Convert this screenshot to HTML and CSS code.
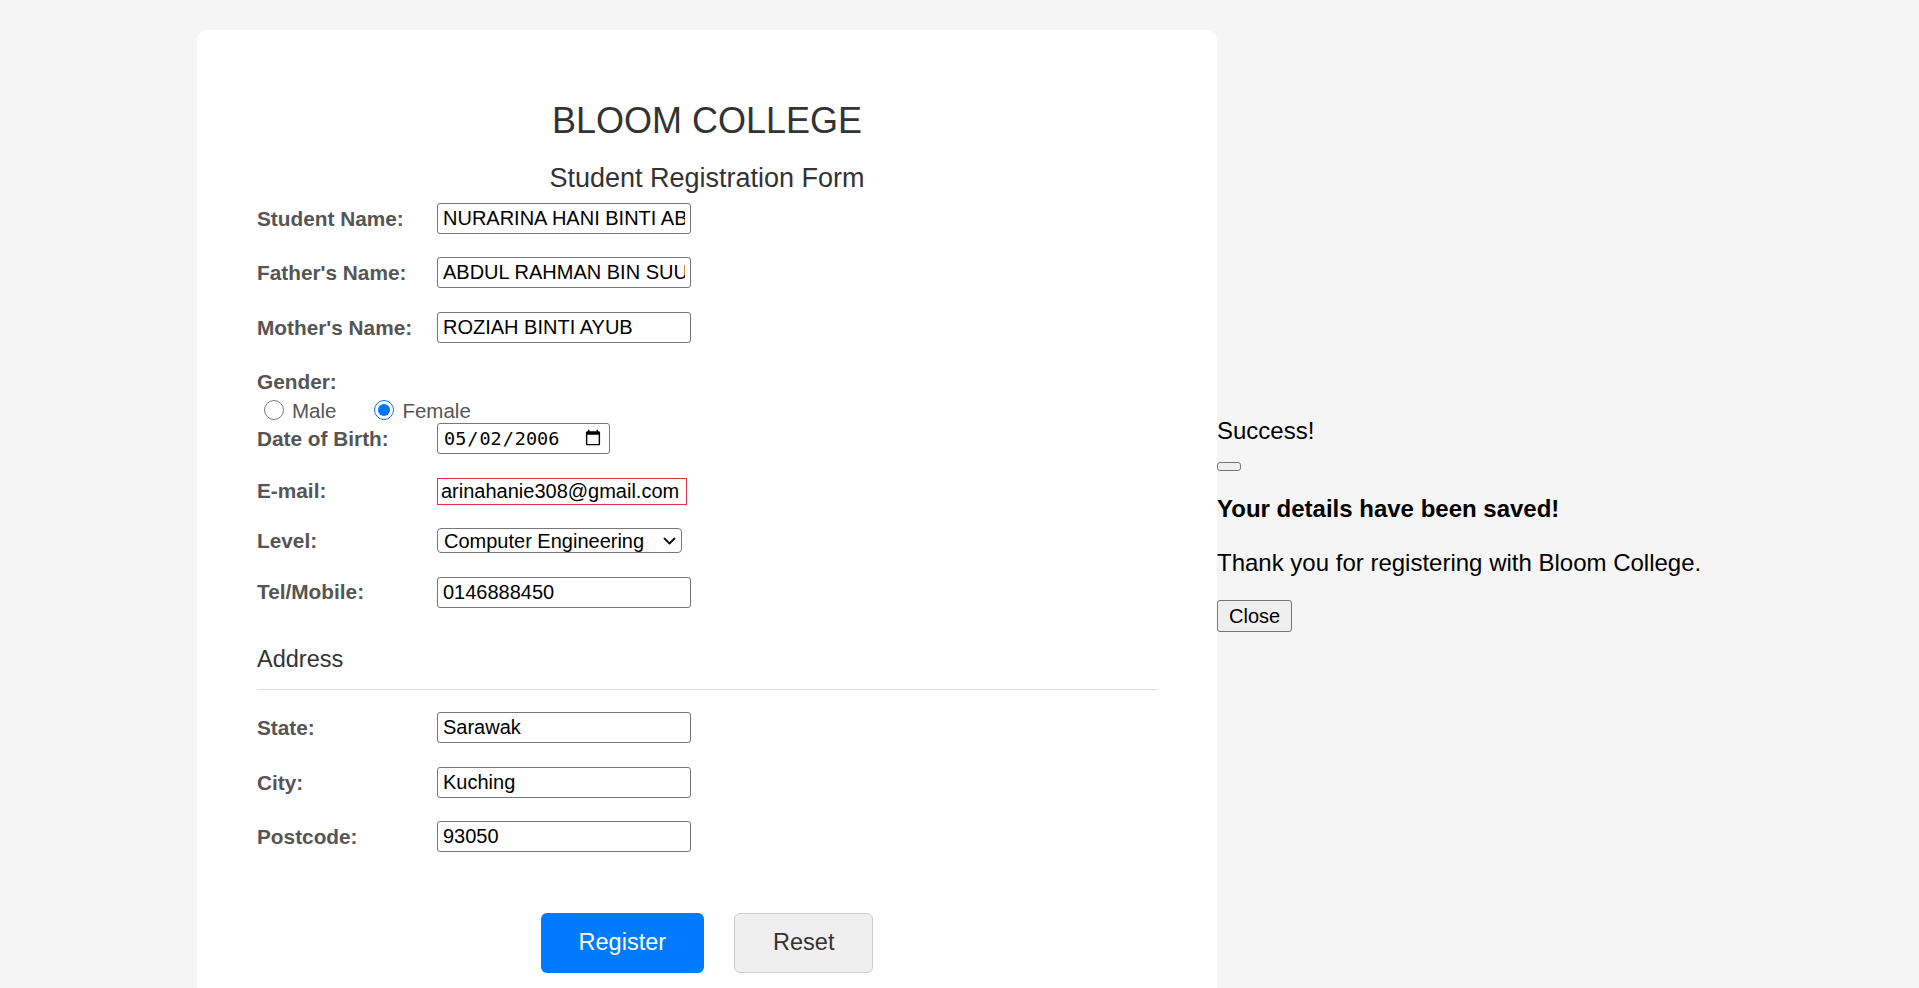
FILE: index.html
```html
<!DOCTYPE html>
<html lang="en">
<head>
<meta charset="utf-8">
<title>Bloom College - Student Registration</title>
<link rel="stylesheet" href="styles.css">
</head>
<body>
  <div class="card">
    <h1 class="title">BLOOM COLLEGE</h1>
    <h2 class="subtitle">Student Registration Form</h2>
    <form class="form" onsubmit="return false;">
      <div class="row">
        <label class="label">Student Name:</label>
        <input class="field" type="text" value="NURARINA HANI BINTI ABDUL RAHMAN">
      </div>
      <div class="row">
        <label class="label">Father's Name:</label>
        <input class="field" type="text" value="ABDUL RAHMAN BIN SUUD">
      </div>
      <div class="row">
        <label class="label">Mother's Name:</label>
        <input class="field" type="text" value="ROZIAH BINTI AYUB">
      </div>
      <div class="gender">
        <div class="label gender-label">Gender:</div>
        <div class="radios">
          <label class="radio-opt"><input type="radio" name="gender">Male</label>
          <label class="radio-opt"><input type="radio" name="gender" checked>Female</label>
        </div>
      </div>
      <div class="row">
        <label class="label">Date of Birth:</label>
        <input class="field date" type="date" value="2006-05-02">
      </div>
      <div class="row">
        <label class="label">E-mail:</label>
        <input class="field email" type="text" value="arinahanie308@gmail.com">
      </div>
      <div class="row">
        <label class="label">Level:</label>
        <span class="select-wrap">
          <select class="select">
            <option>Computer Engineering</option>
          </select>
          <svg class="chev" viewBox="0 0 13 8" aria-hidden="true"><path d="M1.5 1.5 L6.5 6.5 L11.5 1.5" fill="none" stroke="#111" stroke-width="1.9" stroke-linecap="round" stroke-linejoin="round"/></svg>
        </span>
      </div>
      <div class="row">
        <label class="label">Tel/Mobile:</label>
        <input class="field" type="text" value="0146888450">
      </div>

      <h3 class="section">Address</h3>

      <div class="row">
        <label class="label">State:</label>
        <input class="field" type="text" value="Sarawak">
      </div>
      <div class="row">
        <label class="label">City:</label>
        <input class="field" type="text" value="Kuching">
      </div>
      <div class="row">
        <label class="label">Postcode:</label>
        <input class="field" type="text" value="93050">
      </div>

      <div class="actions">
        <button class="btn primary" type="submit">Register</button>
        <button class="btn secondary" type="reset">Reset</button>
      </div>
    </form>
  </div>

  <div class="modal">
    <div class="modal-title">Success!</div>
    <button class="x" type="button"></button>
    <p class="msg-strong">Your details have been saved!</p>
    <p class="msg">Thank you for registering with Bloom College.</p>
    <button class="close" type="button">Close</button>
  </div>
</body>
</html>
```

FILE: styles.css
```css
html {
  overflow: hidden;
}

body {
  margin: 0;
  padding: 30px 0 0 197px;
  background: #f5f5f5;
  font-family: "Liberation Sans", Arial, sans-serif;
  display: flex;
  align-items: center;
}

.card {
  flex: none;
  width: 900px;
  padding: 60px 60px 46px;
  background: #ffffff;
  border-radius: 10px;
}

.title {
  margin: 9.5px 0 22px;
  font-size: 36px;
  line-height: 41px;
  font-weight: normal;
  color: #333;
  text-align: center;
}

.subtitle {
  margin: 0 0 9.3px;
  font-size: 27px;
  line-height: 31px;
  font-weight: normal;
  color: #333;
  text-align: center;
}

.form {
  margin: 0;
}

.row {
  display: flex;
  align-items: center;
  margin-bottom: 23.5px;
}

.label {
  flex: none;
  width: 180px;
  font-size: 20.8px;
  line-height: 23.5px;
  font-weight: bold;
  color: #555;
}

.field {
  box-sizing: border-box;
  width: 254px;
  height: 31px;
  margin: 0;
  padding: 0 5px;
  border: 1px solid #767676;
  border-radius: 3px;
  background: #fff;
  color: #000;
  font-family: "Liberation Sans", Arial, sans-serif;
  font-size: 20px;
}

.field.date {
  width: 173px;
  font-family: "DejaVu Sans Mono", "Liberation Mono", monospace;
  font-size: 18.5px;
}

.field.email {
  width: 250px;
  height: 27px;
  padding: 0 3px;
  border-color: #dc3545;
  border-radius: 0;
  outline: none;
}

.select-wrap {
  position: relative;
  display: block;
}

.select {
  appearance: none;
  -webkit-appearance: none;
  box-sizing: border-box;
  display: block;
  width: 245px;
  height: 25px;
  margin: 0;
  padding: 0 0 0 6px;
  border: 1px solid #767676;
  border-radius: 4px;
  background: #fff;
  color: #000;
  font-family: "Liberation Sans", Arial, sans-serif;
  font-size: 20px;
}

.chev {
  position: absolute;
  left: 226px;
  top: 8.5px;
  width: 13px;
  height: 8px;
  pointer-events: none;
}

.gender {
  margin-bottom: 0;
}

.gender-label {
  display: block;
  padding-top: 3.3px;
}

.radios {
  display: flex;
  align-items: center;
  height: 26px;
  margin-top: 4px;
}

.radio-opt {
  display: flex;
  align-items: center;
  margin-right: 31px;
  font-size: 20.5px;
  line-height: 23px;
  color: #555;
}

.radio-opt input {
  width: 20px;
  height: 20px;
  margin: 0 8px 0 7px;
}

.section {
  margin: 38.6px 0 22px;
  padding-bottom: 16.2px;
  border-bottom: 1px solid #ddd;
  font-size: 23.5px;
  line-height: 27px;
  font-weight: normal;
  color: #333;
}

.actions {
  display: flex;
  justify-content: center;
  gap: 30px;
  margin-top: 60.5px;
}

.btn {
  height: 60px;
  padding: 0 38px;
  border-radius: 6px;
  font-family: "Liberation Sans", Arial, sans-serif;
  font-size: 23.5px;
  cursor: pointer;
}

.btn.primary {
  background: #007bff;
  color: #fff;
  border: none;
}

.btn.secondary {
  background: #efefef;
  color: #333;
  border: 1px solid #ccc;
}

.modal {
  flex: none;
  display: flex;
  flex-direction: column;
  align-items: flex-start;
  font-size: 24px;
  line-height: 28px;
  color: #000;
}

.modal-title {
  margin: 0;
}

.x {
  margin-top: 17.3px;
  width: 24px;
  height: 9px;
  padding: 0;
  border: 1px solid #767676;
  border-radius: 3px;
  background: #efefef;
}

.msg-strong {
  margin: 23.5px 0 0;
  font-weight: bold;
}

.msg {
  margin: 26px 0 0;
}

.close {
  margin-top: 23.8px;
  height: 31.5px;
  padding: 0 11px;
  border: 1px solid #767676;
  border-radius: 3px;
  background: #efefef;
  color: #000;
  font-family: "Liberation Sans", Arial, sans-serif;
  font-size: 20px;
}
```
